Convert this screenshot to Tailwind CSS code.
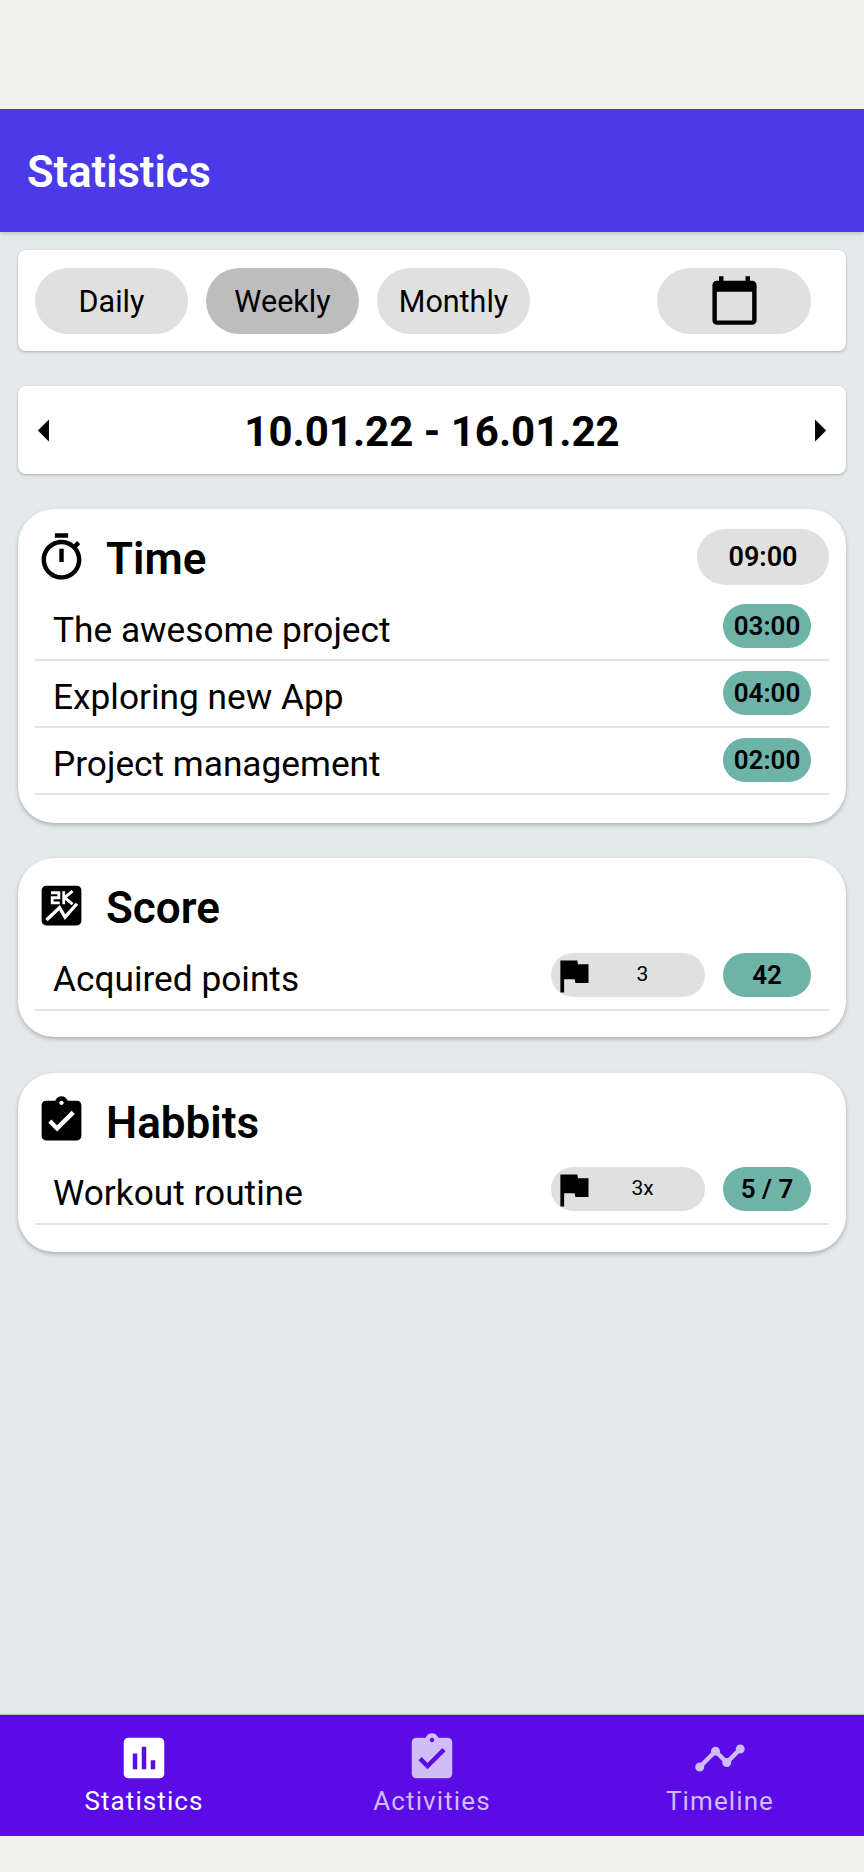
<!DOCTYPE html>
<html lang="en">
<head>
  <meta charset="UTF-8" />
  <meta name="viewport" content="width=device-width, initial-scale=1.0" />
  <title>Statistics</title>
  <script src="https://cdn.jsdelivr.net/npm/@tailwindcss/browser@4"></script>
</head>
<body class="bg-[#f0f1ec] font-['Roboto',sans-serif] text-black">
  <div class="w-[864px] h-[1872px] flex flex-col overflow-hidden">
    <!-- status bar gap -->
    <div class="h-[109px] shrink-0"></div>

    <div class="flex-1 flex flex-col bg-[#e4e9ec] relative">
      <header class="h-[123px] shrink-0 bg-[#4a3ae8] flex items-center pl-[27px] pt-[5px] shadow-[0_2px_4px_rgba(0,0,0,0.15)]">
        <h1 class="text-[43.5px] font-semibold text-white">Statistics</h1>
      </header>

      <main class="flex-1 flex flex-col px-[18px] pt-[18px]">
        <!-- range picker -->
        <section class="h-[101px] bg-white rounded-lg shadow-[0_1px_3px_rgba(0,0,0,0.25)] flex items-center pl-[17px] pr-[35px]">
          <div class="flex gap-[18px]">
            <button class="w-[153px] h-[66px] rounded-[33px] bg-[#e0e0e0] text-[30.5px] pt-[2px]">Daily</button>
            <button class="w-[153px] h-[66px] rounded-[33px] bg-[#bdbdbd] text-[30.5px] pt-[2px]">Weekly</button>
            <button class="w-[153px] h-[66px] rounded-[33px] bg-[#e0e0e0] text-[30.5px] pt-[2px]">Monthly</button>
          </div>
          <button class="ml-auto w-[154px] h-[66px] rounded-[33px] bg-[#e0e0e0] flex items-center justify-center">
            <svg class="w-[53px] h-[53px]" viewBox="0 0 24 24" fill="currentColor"><path d="M20 3h-1V1h-2v2H7V1H5v2H4c-1.1 0-2 .9-2 2v16c0 1.1.9 2 2 2h16c1.1 0 2-.9 2-2V5c0-1.1-.9-2-2-2zm0 18H4V8h16v13z"/></svg>
          </button>
        </section>

        <!-- date range -->
        <section class="mt-[35px] h-[88px] bg-white rounded-lg shadow-[0_1px_3px_rgba(0,0,0,0.25)] flex items-center justify-between">
          <svg class="w-[53px] h-[53px]" viewBox="0 0 24 24" fill="currentColor"><path d="M14 7l-5 5 5 5V7z"/></svg>
          <span class="text-[42px] font-bold mt-[3px]">10.01.22 - 16.01.22</span>
          <svg class="w-[53px] h-[53px]" viewBox="0 0 24 24" fill="currentColor"><path d="M10 17l5-5-5-5v10z"/></svg>
        </section>

        <!-- time -->
        <section class="mt-[35px] h-[314px] bg-white rounded-[36px] shadow-[0_2px_4px_rgba(0,0,0,0.25)] px-[17px] pt-[20px]">
          <div class="h-[56px] flex items-center">
            <svg class="w-[53px] h-[53px]" viewBox="0 0 24 24" fill="currentColor"><path d="M15 1H9v2h6V1zm-4 13h2V8h-2v6zm8.03-6.61l1.42-1.42c-.43-.51-.9-.99-1.41-1.41l-1.42 1.42C16.07 4.74 14.12 4 12 4c-4.97 0-9 4.03-9 9s4.02 9 9 9 9-4.03 9-9c0-2.12-.74-4.07-1.97-5.61zM12 20c-3.87 0-7-3.13-7-7s3.13-7 7-7 7 3.13 7 7-3.13 7-7 7z"/></svg>
            <h2 class="ml-[18px] mt-[3px] text-[44px] font-semibold">Time</h2>
            <span class="ml-auto w-[132px] h-[56px] rounded-[28px] bg-[#e0e0e0] flex items-center justify-center text-[27px] font-semibold">09:00</span>
          </div>
          <div class="mt-[9px]">
            <div class="h-[67px] border-b-[2.5px] border-[#e3e3e3] flex items-start pt-[10px] pl-[18px] pr-[18px]">
              <span class="text-[35.25px] leading-[48px] pt-[2px]">The awesome project</span>
              <span class="ml-auto w-[88px] h-[44px] rounded-[22px] bg-[#6db3a8] flex items-center justify-center text-[26px] font-semibold">03:00</span>
            </div>
            <div class="h-[67px] border-b-[2.5px] border-[#e3e3e3] flex items-start pt-[10px] pl-[18px] pr-[18px]">
              <span class="text-[35.25px] leading-[48px] pt-[2px]">Exploring new App</span>
              <span class="ml-auto w-[88px] h-[44px] rounded-[22px] bg-[#6db3a8] flex items-center justify-center text-[26px] font-semibold">04:00</span>
            </div>
            <div class="h-[67px] border-b-[2.5px] border-[#e3e3e3] flex items-start pt-[10px] pl-[18px] pr-[18px]">
              <span class="text-[35.25px] leading-[48px] pt-[2px]">Project management</span>
              <span class="ml-auto w-[88px] h-[44px] rounded-[22px] bg-[#6db3a8] flex items-center justify-center text-[26px] font-semibold">02:00</span>
            </div>
          </div>
        </section>

        <!-- score -->
        <section class="mt-[35px] h-[179px] bg-white rounded-[36px] shadow-[0_2px_4px_rgba(0,0,0,0.25)] px-[17px] pt-[19px]">
          <div class="h-[56px] flex items-center">
            <svg class="w-[53px] h-[53px]" viewBox="0 0 24 24"><path fill="currentColor" d="M19 3H5c-1.1 0-2 .9-2 2v14c0 1.1.9 2 2 2h14c1.1 0 2-.9 2-2V5c0-1.1-.9-2-2-2z"/><path fill="none" stroke="#fff" stroke-width="1.3" d="M7.2 6.2h3.6v2.3H7.8v2.3h3.4M13 5.5v5.9M17 5.5l-3.6 2.9 3.6 3"/><path fill="none" stroke="#fff" stroke-width="1.5" d="M5.2 18.6l5.9-5.6 2.5 4.3 5.4-6.1"/></svg>
            <h2 class="ml-[18px] mt-[5px] text-[44px] font-semibold">Score</h2>
          </div>
          <div class="mt-[9px]">
            <div class="h-[69px] border-b-[2.5px] border-[#e3e3e3] flex items-start pt-[11px] pl-[18px] pr-[18px]">
              <span class="text-[35.25px] leading-[48px] pt-[2px]">Acquired points</span>
              <span class="ml-auto w-[154px] h-[44px] rounded-[22px] bg-[#e0e0e0] flex items-center text-[21px]">
                <svg class="w-[45px] h-[45px] shrink-0" viewBox="0 0 24 24" fill="currentColor"><path d="M14.4 6L14 4H5v17h2v-7h5.6l.4 2h7V6z"/></svg>
                <span class="flex-1 text-center pr-[16px]">3</span>
              </span>
              <span class="ml-[18px] w-[88px] h-[44px] rounded-[22px] bg-[#6db3a8] flex items-center justify-center text-[26px] font-semibold">42</span>
            </div>
          </div>
        </section>

        <!-- habbits -->
        <section class="mt-[36px] h-[179px] bg-white rounded-[36px] shadow-[0_2px_4px_rgba(0,0,0,0.25)] px-[17px] pt-[19px]">
          <div class="h-[56px] flex items-center">
            <svg class="w-[53px] h-[53px]" viewBox="0 0 24 24" fill="currentColor"><path d="M19 3h-4.18C14.4 1.84 13.3 1 12 1c-1.3 0-2.4.84-2.82 2H5c-1.1 0-2 .9-2 2v14c0 1.1.9 2 2 2h14c1.1 0 2-.9 2-2V5c0-1.1-.9-2-2-2zm-7 0c.55 0 1 .45 1 1s-.45 1-1 1-1-.45-1-1 .45-1 1-1zm-2 14l-4-4 1.41-1.41L10 14.17l6.59-6.59L18 9l-8 8z"/></svg>
            <h2 class="ml-[18px] mt-[5px] text-[44px] font-semibold">Habbits</h2>
          </div>
          <div class="mt-[9px]">
            <div class="h-[68px] border-b-[2.5px] border-[#e3e3e3] flex items-start pt-[10px] pl-[18px] pr-[18px]">
              <span class="text-[35.25px] leading-[48px] pt-[2px]">Workout routine</span>
              <span class="ml-auto w-[154px] h-[44px] rounded-[22px] bg-[#e0e0e0] flex items-center text-[21px]">
                <svg class="w-[45px] h-[45px] shrink-0" viewBox="0 0 24 24" fill="currentColor"><path d="M14.4 6L14 4H5v17h2v-7h5.6l.4 2h7V6z"/></svg>
                <span class="flex-1 text-center pr-[16px]">3x</span>
              </span>
              <span class="ml-[18px] w-[88px] h-[44px] rounded-[22px] bg-[#6db3a8] flex items-center justify-center text-[26px] font-semibold">5 / 7</span>
            </div>
          </div>
        </section>
      </main>

      <!-- bottom nav -->
      <nav class="h-[122px] shrink-0 bg-[#5a0be6] grid grid-cols-3 border-t border-[#b9bcc8] text-[26px] tracking-[1.1px]">
        <a class="flex flex-col items-center pt-[16px] text-white">
          <svg class="w-[54px] h-[54px]" viewBox="0 0 24 24" fill="currentColor"><path d="M19 3H5c-1.1 0-2 .9-2 2v14c0 1.1.9 2 2 2h14c1.1 0 2-.9 2-2V5c0-1.1-.9-2-2-2zM9 17H7v-7h2v7zm4 0h-2V7h2v10zm4 0h-2v-4h2v4z"/></svg>
          <span class="leading-[30px] mt-[1px]">Statistics</span>
        </a>
        <a class="flex flex-col items-center pt-[16px] text-[#d0bcf8]">
          <svg class="w-[54px] h-[54px]" viewBox="0 0 24 24" fill="currentColor"><path d="M19 3h-4.18C14.4 1.84 13.3 1 12 1c-1.3 0-2.4.84-2.82 2H5c-1.1 0-2 .9-2 2v14c0 1.1.9 2 2 2h14c1.1 0 2-.9 2-2V5c0-1.1-.9-2-2-2zm-7 0c.55 0 1 .45 1 1s-.45 1-1 1-1-.45-1-1 .45-1 1-1zm-2 14l-4-4 1.41-1.41L10 14.17l6.59-6.59L18 9l-8 8z"/></svg>
          <span class="leading-[30px] mt-[1px]">Activities</span>
        </a>
        <a class="flex flex-col items-center pt-[16px] text-[#d0bcf8]">
          <svg class="w-[54px] h-[54px]" viewBox="0 0 24 24" fill="currentColor"><path d="M23 8c0 1.1-.9 2-2 2-.18 0-.35-.02-.51-.07l-3.56 3.55c.05.16.07.34.07.52 0 1.1-.9 2-2 2s-2-.9-2-2c0-.18.02-.36.07-.52l-2.55-2.55c-.16.05-.34.07-.52.07s-.36-.02-.52-.07l-4.55 4.56c.05.16.07.33.07.51 0 1.1-.9 2-2 2s-2-.9-2-2 .9-2 2-2c.18 0 .35.02.51.07l4.56-4.55C8.02 9.36 8 9.18 8 9c0-1.1.9-2 2-2s2 .9 2 2c0 .18-.02.36-.07.52l2.55 2.55c.16-.05.34-.07.52-.07s.36.02.52.07l3.55-3.56C19.02 8.35 19 8.18 19 8c0-1.1.9-2 2-2s2 .9 2 2z"/></svg>
          <span class="leading-[30px] mt-[1px]">Timeline</span>
        </a>
      </nav>
    </div>

    <!-- gesture bar gap -->
    <div class="h-[36px] shrink-0"></div>
  </div>
</body>
</html>
